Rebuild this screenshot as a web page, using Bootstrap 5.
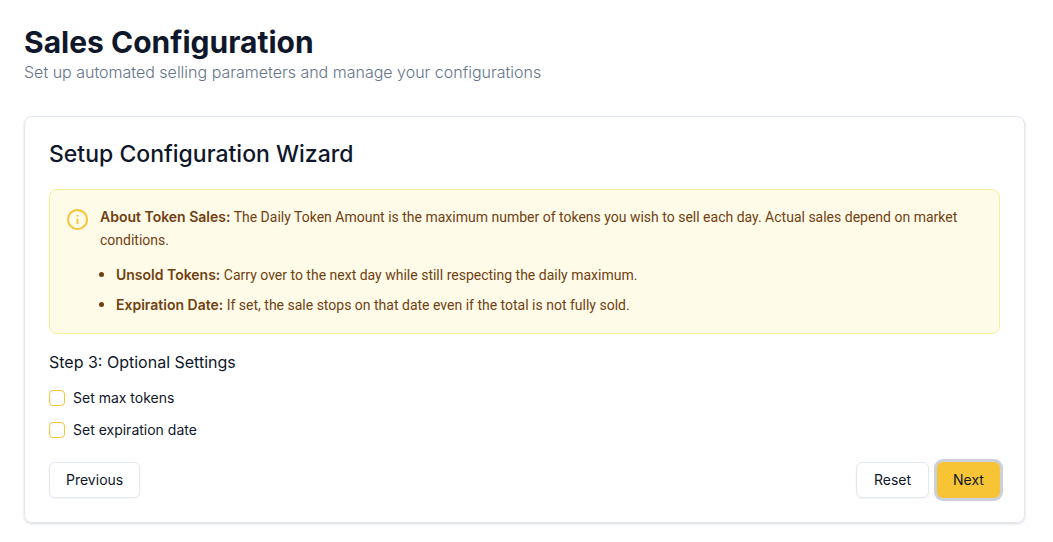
<!DOCTYPE html>
<html lang="en">
<head>
<meta charset="utf-8">
<meta name="viewport" content="width=device-width, initial-scale=1">
<title>Sales Configuration</title>
<link href="https://cdn.jsdelivr.net/npm/bootstrap@5.3.0/dist/css/bootstrap.min.css" rel="stylesheet">
<style>
  body { font-family: Inter, "Open Sans", sans-serif; color: #0f172a; background: #fff; font-size: 14px; line-height: 20px; }
  .page-body { padding: 24px 28px 16px 24px; }
  .page-title { font-size: 30px; line-height: 36px; font-weight: 700; }
  .page-lead { font-size: 16px; line-height: 24px; font-weight: 300; color: #64748b; margin-bottom: 32px; }
  .wizard { border: 1px solid #e2e8f0; border-radius: 8px; box-shadow: 0 1px 3px rgba(0,0,0,.1), 0 1px 2px rgba(0,0,0,.06); }
  .wizard-title { font-size: 23px; line-height: 26px; font-weight: 500; margin-bottom: 22px; }
  .note { background: #fefbe8; border: 1px solid #f9ee98; border-radius: 8px; color: #713f12; font-family: Roboto, sans-serif; line-height: 23px; }
  .note strong { font-family: Inter, sans-serif; font-weight: 600; line-height: 16px; }
  .note ul { padding-left: 16px; margin-top: 11px; }
  .note li + li { margin-top: 6px; }
  .note li::marker { font-size: 16px; }
  .note-icon { color: #f7c436; margin: 2px 11px 0 0; }
  .step-title { font-size: 16px; line-height: 24px; font-weight: 400; }
  .option { line-height: 16px; }
  .option .form-check-input { width: 16px; height: 16px; border-color: #f7c436; border-radius: 4px; }
  .wiz-btn { height: 36px; min-width: 73px; padding: 0 16px; font-size: 14px; line-height: 20px; border: 1px solid #e2e8f0; border-radius: 6px; color: #0f172a; box-shadow: 0 1px 2px rgba(0,0,0,.05); }
  .wiz-btn-next, .wiz-btn-next:hover { min-width: 63px; padding: 0 15px; background: #f7c436; border: 0; box-shadow: 0 0 0 3px #cbd0dc; }
</style>
</head>
<body>
<main class="page-body">
  <h1 class="page-title mb-0">Sales Configuration</h1>
  <p class="page-lead">Set up automated selling parameters and manage your configurations</p>
  <section class="wizard p-4">
    <h2 class="wizard-title">Setup Configuration Wizard</h2>
    <div class="note d-flex align-items-start p-3 mb-3">
      <svg class="note-icon flex-shrink-0" width="23" height="23" viewBox="0 0 24 24" fill="none" stroke="currentColor" stroke-width="2" stroke-linecap="round" aria-hidden="true"><circle cx="12" cy="12" r="10"/><path d="M12 12v4M12 8h.01"/></svg>
      <div>
        <p class="mb-0"><strong>About Token Sales:</strong> The Daily Token Amount is the maximum number of tokens you wish to sell each day. Actual sales depend on market conditions.</p>
        <ul class="mb-0">
          <li><strong>Unsold Tokens:</strong> Carry over to the next day while still respecting the daily maximum.</li>
          <li><strong>Expiration Date:</strong> If set, the sale stops on that date even if the total is not fully sold.</li>
        </ul>
      </div>
    </div>
    <form>
      <h3 class="step-title mb-3">Step 3: Optional Settings</h3>
      <div class="d-flex flex-column gap-3 mb-4">
        <div class="option d-flex align-items-center gap-2">
          <input class="form-check-input m-0" type="checkbox" id="max-tokens"><label for="max-tokens">Set max tokens</label>
        </div>
        <div class="option d-flex align-items-center gap-2">
          <input class="form-check-input m-0" type="checkbox" id="expiration"><label for="expiration">Set expiration date</label>
        </div>
      </div>
      <div class="d-flex gap-2">
        <button type="button" class="btn wiz-btn me-auto">Previous</button>
        <button type="reset" class="btn wiz-btn">Reset</button>
        <button type="button" class="btn wiz-btn wiz-btn-next">Next</button>
      </div>
    </form>
  </section>
</main>
<script src="https://cdn.jsdelivr.net/npm/bootstrap@5.3.0/dist/js/bootstrap.bundle.min.js"></script>
</body>
</html>
